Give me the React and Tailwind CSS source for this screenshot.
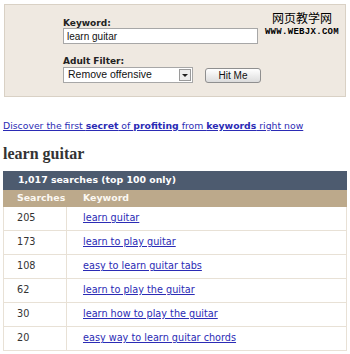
const ROWS = [
  { count: '205', keyword: 'learn guitar' },
  { count: '173', keyword: 'learn to play guitar' },
  { count: '108', keyword: 'easy to learn guitar tabs' },
  { count: '62', keyword: 'learn to play the guitar' },
  { count: '30', keyword: 'learn how to play the guitar' },
  { count: '20', keyword: 'easy way to learn guitar chords' },
];

const verdana = "font-['DejaVu_Sans',Verdana,sans-serif]";
const arial = "font-['Liberation_Sans',Arial,sans-serif]";

function SearchPanel() {
  return (
    <div className="relative mx-[1px] h-[93px] border border-[#d9d1c5] bg-[#efe9e1] pl-[58px] pt-[12px]">
      <div className="absolute right-[6px] top-[5px] flex flex-col items-center leading-none text-black">
        <span className="font-['Noto_Sans_CJK_SC',sans-serif] text-[12px] leading-[15px]">网页教学网</span>
        <span className="mt-[3px] font-['Liberation_Mono',monospace] text-[9px] font-bold tracking-[0.3px]">WWW.WEBJX.COM</span>
      </div>

      <div className={`${verdana} text-[9px] font-bold leading-[12px] text-[#222]`}>Keyword:</div>
      <div className={`${arial} mt-[-1px] flex h-[16px] w-[195px] items-center border border-[#a7a7a7] bg-white pl-[3px] text-[10px] text-[#111]`}>
        learn guitar
      </div>

      <div className={`${verdana} mt-[11px] text-[9px] font-bold leading-[12px] text-[#222]`}>Adult Filter:</div>
      <div className="flex items-center">
        <div className={`${arial} flex h-[16px] w-[130px] items-center border border-[#a7a7a7] bg-white pl-[4px] text-[10.5px] text-[#111]`}>
          <span className="flex-1">Remove offensive</span>
          <span className="mr-[1px] flex h-[12px] w-[12px] items-center justify-center border border-[#9a9a9a] bg-[#eeeeee]">
            <svg width="6" height="3" viewBox="0 0 6 3"><polygon points="0,0 6,0 3,3" fill="#222" /></svg>
          </span>
        </div>
        <div className={`${arial} ml-[12px] flex h-[15px] w-[56px] items-center justify-center rounded-[3px] border border-[#8f8f8f] bg-gradient-to-b from-white to-[#dcdcdc] text-[10px] text-[#111]`}>
          Hit Me
        </div>
      </div>
    </div>
  );
}

export default function App() {
  return (
    <div className="h-[354px] w-[350px] overflow-hidden bg-white px-[3px] pt-[4px]">
      <SearchPanel />

      <div className={`${verdana} mt-[23px] text-[9.3px] leading-[12px] text-[#2b2bb5] underline`}>
        Discover the first <b>secret</b> of <b>profiting</b> from <b>keywords</b> right now
      </div>

      <h1 className="mt-[12px] font-['Liberation_Serif',Georgia,serif] text-[16px] font-bold leading-[20px] text-[#333]">
        learn guitar
      </h1>

      <div className={`${verdana} mt-[7px]`}>
        <div className="flex h-[19px] items-center bg-[#4d5b6f] pl-[15px] text-[9.4px] font-bold text-white">
          1,017 searches (top 100 only)
        </div>
        <div className="flex h-[17px] items-center bg-[#bca98b] text-[9.4px] font-bold text-[#fbf8f2]">
          <div className="w-[64px] pl-[14px]">Searches</div>
          <div className="pl-[16px]">Keyword</div>
        </div>
        {ROWS.map(row => (
          <div key={row.count} className="flex h-[24px] border-b border-l border-r border-[#e8e1d6] text-[9.7px]">
            <div className="flex w-[63px] items-center border-r border-[#e8e1d6] pl-[13px] text-[#333]">{row.count}</div>
            <div className="flex items-center pl-[16px]">
              <a href="#" className="text-[#2b2bb5] underline">{row.keyword}</a>
            </div>
          </div>
        ))}
      </div>
    </div>
  );
}
